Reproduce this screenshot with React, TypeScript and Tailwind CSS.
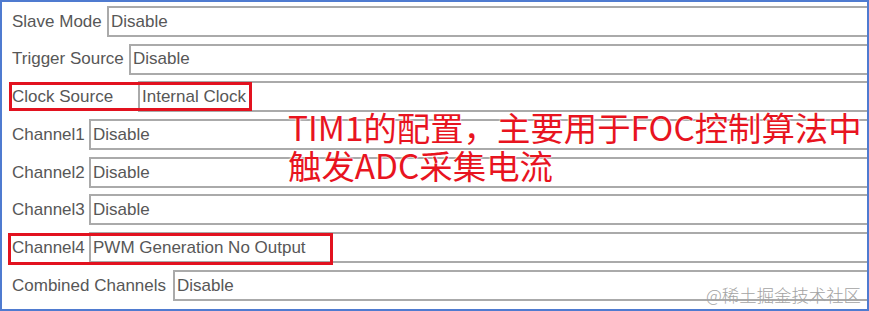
const ROWS = [
  { label: "Slave Mode", value: "Disable", box: "w-[105px]" },
  { label: "Trigger Source", value: "Disable", box: "w-[127px]" },
  { label: "Clock Source", value: "Internal Clock", box: "w-[136px]" },
  { label: "Channel1", value: "Disable", box: "w-[87px]" },
  { label: "Channel2", value: "Disable", box: "w-[87px]" },
  { label: "Channel3", value: "Disable", box: "w-[87px]" },
  { label: "Channel4", value: "PWM Generation No Output", box: "w-[87px]" },
  { label: "Combined Channels", value: "Disable", box: "w-[171px]" },
] as const;

export default function App() {
  return (
    <div className="relative w-[869px] h-[311px] overflow-hidden bg-white border-2 border-[#4f7bd0] font-['Liberation_Sans',Arial,sans-serif]">
      {/* Parameter rows */}
      <div className="flex flex-col gap-[6.7px] pt-[4px]">
        {ROWS.map((row) => (
          <ConfigRow key={row.label} {...row} />
        ))}
      </div>

      {/* Highlight frames */}
      <div className="absolute left-[7px] top-[80px] w-[243px] h-[29px] border-[3px] border-[#e2121f]" />
      <div className="absolute left-[6px] top-[231px] w-[325px] h-[32px] border-[3px] border-[#e2121f]" />

      {/* Annotation */}
      <div className="absolute left-[286px] top-[106px] text-[33.4px] leading-[38px] text-[#e8141f] font-['Noto_Sans_CJK_SC',sans-serif] whitespace-nowrap [text-shadow:0_0_2px_#fff,0_0_2px_#fff,0_0_1px_#fff]">
        <div>TIM1的配置，主要用于FOC控制算法中</div>
        <div>触发ADC采集电流</div>
      </div>

      {/* Watermark */}
      <div className="absolute right-[6px] bottom-[4px] text-[17.4px] leading-[20px] text-[#a3a3a3] font-['Noto_Sans_CJK_SC',sans-serif] font-light">
        @稀土掘金技术社区
      </div>
    </div>
  );
}

function ConfigRow({
  label,
  value,
  box,
}: {
  label: string;
  value: string;
  box: string;
}) {
  return (
    <div className="flex items-stretch h-[31px] text-[17px] text-[#575757]">
      <div className={`${box} shrink-0 flex items-center pl-[10px] whitespace-nowrap`}>
        {label}
      </div>
      <div className="flex-1 -mr-[6px] flex items-center pl-[2px] border-2 border-[#aaaaaa] whitespace-nowrap">
        <span>{value}</span>
      </div>
    </div>
  );
}
